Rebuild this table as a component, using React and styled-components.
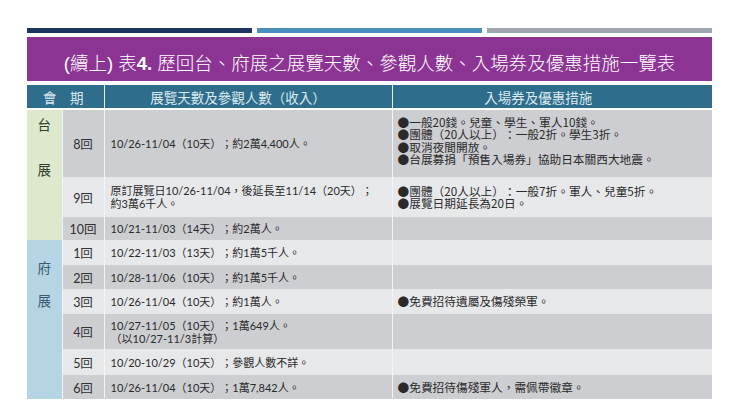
import React from "react";
import styled, { createGlobalStyle } from "styled-components";

const GlobalStyle = createGlobalStyle`
  html, body {
    margin: 0;
    padding: 0;
    background: #ffffff;
  }
  body {
    font-family: "Lato", "Noto Sans CJK TC", sans-serif;
    text-spacing-trim: space-all;
  }
`;

const Page = styled.div`
  width: 685px;
  padding: 28px 0 0 27px;
`;

const Bars = styled.div`
  display: flex;
  gap: 5px;
  height: 5px;
`;

const Bar = styled.div`
  flex: 1;
  background: ${(p) => p.color};
`;

const TitleBar = styled.div`
  margin-top: 4px;
  height: 44px;
  box-sizing: border-box;
  padding-bottom: 6px;
  background: #8c3494;
  display: flex;
  align-items: flex-end;
  justify-content: center;
`;

const Title = styled.h1`
  margin: 0;
  font-family: "Liberation Sans", "Noto Sans CJK TC", sans-serif;
  font-size: 18.5px;
  line-height: 22px;
  font-weight: 300;
  color: #ffffff;

  b {
    font-weight: 700;
  }
`;

const Table = styled.table`
  margin-top: 4px;
  width: 685px;
  border-collapse: collapse;
  table-layout: fixed;
`;

const HeadCell = styled.th`
  height: 23px;
  padding: 0 ${(p) => p.shift || 0}px 0 0;
  background: #2f6d8c;
  color: #dbe9f0;
  font-size: 13.5px;
  font-weight: 400;
  text-align: center;
  border-right: 1px solid #e9eef1;
  border-bottom: 2px solid #ffffff;

  &:last-child {
    border-right: none;
  }
`;

const Row = styled.tr`
  height: ${(p) => p.h}px;
  background: ${(p) => (p.dark ? "#cdced1" : "#e7e8ea")};
`;

const GroupCell = styled.td`
  padding: ${(p) => p.padTop}px 0 0;
  vertical-align: top;
  background: ${(p) => p.bg};
  border-right: 1px solid #f2f3f4;
`;

const GroupLabel = styled.div`
  display: flex;
  flex-direction: column;
  align-items: center;
  gap: ${(p) => p.gap}px;
  font-size: 13.5px;
  line-height: 17px;
  color: ${(p) => p.color};
`;

const RoundCell = styled.td`
  padding: 0;
  text-align: center;
  font-size: 12.5px;
  color: #303030;
  border-right: 1px solid #f2f3f4;
`;

const DataCell = styled.td`
  padding: 0 4px 0 6px;
  font-size: 11px;
  line-height: 13px;
  color: #2a2a2a;
  vertical-align: middle;
  border-right: 1px solid #f2f3f4;
`;

const NoteCell = styled.td`
  padding: 0 4px ${(p) => (p.lift ? 6 : 0)}px 5px;
  font-family: "Noto Sans CJK TC", sans-serif;
  font-size: 11.7px;
  line-height: 12.5px;
  color: #2a2a2a;
  vertical-align: middle;
`;

const Line = styled.div`
  white-space: nowrap;
`;

const rows = [
  {
    round: "8回",
    h: 68,
    lift: true,
    data: ["10/26-11/04（10天）；約2萬4,400人。"],
    notes: [
      "●一般20錢。兒童、學生、軍人10錢。",
      "●團體（20人以上）：一般2折。學生3折。",
      "●取消夜間開放。",
      "●台展募捐「預售入場券」協助日本關西大地震。",
    ],
  },
  {
    round: "9回",
    h: 40,
    data: ["原訂展覽日10/26-11/04，後延長至11/14（20天）；", "約3萬6千人。"],
    notes: ["●團體（20人以上）：一般7折。軍人、兒童5折。", "●展覽日期延長為20日。"],
  },
  { round: "10回", h: 23, data: ["10/21-11/03（14天）；約2萬人。"], notes: [] },
  { round: "1回", h: 25, data: ["10/22-11/03（13天）；約1萬5千人。"], notes: [] },
  { round: "2回", h: 24, data: ["10/28-11/06（10天）；約1萬5千人。"], notes: [] },
  {
    round: "3回",
    h: 25,
    data: ["10/26-11/04（10天）；約1萬人。"],
    notes: ["●免費招待遺屬及傷殘榮軍。"],
  },
  {
    round: "4回",
    h: 35,
    data: ["10/27-11/05（10天）；1萬649人。", "（以10/27-11/3計算）"],
    notes: [],
  },
  { round: "5回", h: 26, data: ["10/20-10/29（10天）；參觀人數不詳。"], notes: [] },
  {
    round: "6回",
    h: 24,
    data: ["10/26-11/04（10天）；1萬7,842人。"],
    notes: ["●免費招待傷殘軍人，需佩帶徽章。"],
  },
];

const groups = {
  0: { span: 3, bg: "#dde8cd", color: "#34402e", padTop: 7, gap: 28, text: ["台", "展"] },
  3: { span: 6, bg: "#b5d5e5", color: "#3b5a70", padTop: 20, gap: 16, text: ["府", "展"] },
};

const App = () => {
  return (
    <Page lang="zh-Hant">
      <GlobalStyle />
      <Bars>
        <Bar color="#1d3461" />
        <Bar color="#4b8fbf" />
        <Bar color="#9fa6ad" />
      </Bars>
      <TitleBar>
        <Title>
          (續上) 表<b>4.</b> 歷回台、府展之展覽天數、參觀人數、入場券及優惠措施一覽表
        </Title>
      </TitleBar>
      <Table>
        <colgroup>
          <col style={{ width: 35 }} />
          <col style={{ width: 42 }} />
          <col style={{ width: 288 }} />
          <col style={{ width: 320 }} />
        </colgroup>
        <thead>
          <tr>
            <HeadCell colSpan={2} shift={4}>會　期</HeadCell>
            <HeadCell shift={20}>展覽天數及參觀人數（收入）</HeadCell>
            <HeadCell shift={28}>入場券及優惠措施</HeadCell>
          </tr>
        </thead>
        <tbody>
          {rows.map((r, i) => {
            const g = groups[i];
            return (
              <Row key={r.round + i} h={r.h} dark={i % 2 === 0}>
                {g ? (
                  <GroupCell rowSpan={g.span} bg={g.bg} padTop={g.padTop}>
                    <GroupLabel color={g.color} gap={g.gap}>
                      {g.text.map((t, k) => (
                        <span key={k}>{t}</span>
                      ))}
                    </GroupLabel>
                  </GroupCell>
                ) : null}
                <RoundCell>{r.round}</RoundCell>
                <DataCell>
                  {r.data.map((t, k) => (
                    <Line key={k}>{t}</Line>
                  ))}
                </DataCell>
                <NoteCell lift={r.lift}>
                  {r.notes.map((t, k) => (
                    <Line key={k}>{t}</Line>
                  ))}
                </NoteCell>
              </Row>
            );
          })}
        </tbody>
      </Table>
    </Page>
  );
};

export default App;
